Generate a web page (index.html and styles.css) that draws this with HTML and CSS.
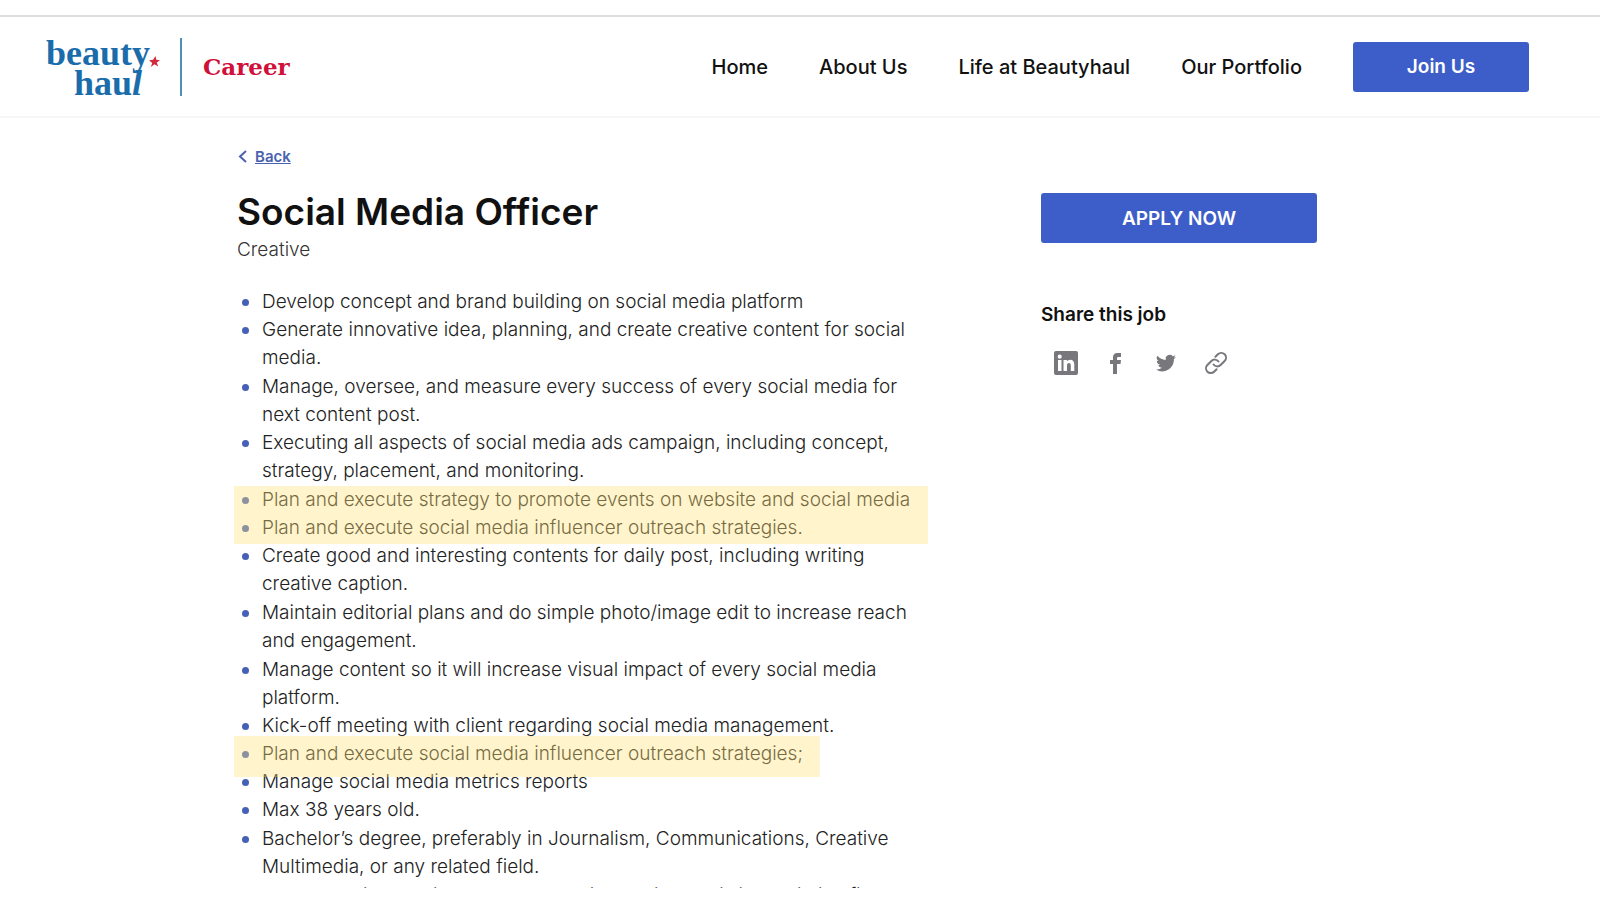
FILE: index.html
```html
<!DOCTYPE html>
<html lang="en">
<head>
  <meta charset="UTF-8">
  <title>Social Media Officer - Beautyhaul Career</title>
  <link rel="stylesheet" href="styles.css">
</head>
<body>

<div class="page">
  <header class="header">
    <a class="brand" href="#">
      <span class="logo">
        <span class="logo-top">beauty</span>
        <span class="logo-bottom">hau<i>l</i></span>
        <svg class="logo-star" viewBox="0 0 24 24" aria-hidden="true"><path d="M14 0l2 8 8 1-7 5 3 9-8-5-8 6 3-9-7-6 9-1z"/></svg>
      </span>
      <span class="brand-career">Career</span>
    </a>
    <nav class="nav">
      <a href="#">Home</a>
      <a href="#">About Us</a>
      <a href="#">Life at Beautyhaul</a>
      <a href="#">Our Portfolio</a>
      <button class="btn btn-join" type="button">Join Us</button>
    </nav>
  </header>

  <main class="content">
    <a class="back" href="#">
      <svg viewBox="0 0 10 14" aria-hidden="true"><path d="M9 2L3 7.500l6 5.500"/></svg>
      <span>Back</span>
    </a>

    <div class="columns">
      <section class="job">
        <h1>Social Media Officer</h1>
        <p class="category">Creative</p>
        <ul class="tasks">
          <li>Develop concept and brand building on social media platform</li>
          <li class="spaced">Generate innovative idea, planning, and create creative content for social media.</li>
          <li>Manage, oversee, and measure every success of every social media for next content post.</li>
          <li class="spaced">Executing all aspects of social media ads campaign, including concept, strategy, placement, and monitoring.</li>
          <li class="marked marked-double">Plan and execute strategy to promote events on website and social media</li>
          <li>Plan and execute social media influencer outreach strategies.</li>
          <li class="spaced">Create good and interesting contents for daily post, including writing creative caption.</li>
          <li class="spaced">Maintain editorial plans and do simple photo/image edit to increase reach and engagement.</li>
          <li>Manage content so it will increase visual impact of every social media platform.</li>
          <li>Kick-off meeting with client regarding social media management.</li>
          <li class="marked marked-single">Plan and execute social media influencer outreach strategies;</li>
          <li>Manage social media metrics reports</li>
          <li class="spaced">Max 38 years old.</li>
          <li class="spaced">Bachelor’s degree, preferably in Journalism, Communications, Creative Multimedia, or any related field.</li>
          <li>Have experience min. 2 years as Social Media Specialist or similar field</li>
        </ul>
      </section>

      <aside class="sidebar">
        <button class="btn btn-apply" type="button">APPLY NOW</button>
        <h2>Share this job</h2>
        <div class="share">
          <a href="#" aria-label="LinkedIn">
            <svg viewBox="0 0 24 24"><path fill-rule="evenodd" d="M2 0h20a2 2 0 0 1 2 2v20a2 2 0 0 1-2 2H2a2 2 0 0 1-2-2V2a2 2 0 0 1 2-2zM4 9v11h3.500V9zM5.700 3.600a2 2 0 1 0 0 4.100 2 2 0 0 0 0-4.100zM9.500 9v11H13v-5.500c0-1.700.7-2.600 2-2.600s1.800.9 1.800 2.600V20h3.500v-6.300c0-3.300-1.500-5-4.100-5-1.500 0-2.600.7-3.200 1.800V9z"/></svg>
          </a>
          <a href="#" aria-label="Facebook">
            <svg viewBox="0 0 24 24"><path d="M9 23V13H6V9h3V6.500C9 3.500 10.500 2 13.200 2H17v4h-2.500C13.300 6 13 6.500 13 7.500V9h4l-.5 4H13v10z"/></svg>
          </a>
          <a href="#" aria-label="Twitter">
            <svg viewBox="0 0 24 24"><path d="M22 5.900c-.7.300-1.500.5-2.400.600.900-.500 1.500-1.300 1.800-2.300-.8.500-1.700.8-2.600 1a4.100 4.100 0 0 0-7 3.700A11.600 11.600 0 0 1 3.400 4.700a4.100 4.100 0 0 0 1.300 5.500c-.7 0-1.300-.2-1.900-.500 0 2 1.400 3.700 3.300 4.100-.6.200-1.200.2-1.900.100.500 1.600 2 2.800 3.800 2.800A8.200 8.200 0 0 1 2 18.400a11.600 11.600 0 0 0 17.900-10.300c.8-.6 1.500-1.300 2.100-2.200z"/></svg>
          </a>
          <a href="#" aria-label="Copy link">
            <svg class="stroke" viewBox="0 0 24 24"><path d="M9.500 13.500a4.700 4.700 0 0 0 7.100.5l4-4a4.700 4.700 0 0 0-6.700-6.700l-2.500 2.500M14.500 10.500a4.700 4.700 0 0 0-7.100-.5l-4 4a4.700 4.700 0 0 0 6.700 6.700l2.500-2.500"/></svg>
          </a>
        </div>
      </aside>
    </div>
  </main>
</div>

</body>
</html>
```
FILE: styles.css
```css
* {
  box-sizing: border-box;
}
body {
  margin: 0;
  background: #fff;
  color: #111;
  font-family: "Inter", sans-serif;
}
a {
  color: inherit;
  text-decoration: none;
}
.page {
  height: calc(100vh - 12px);
  padding-top: 15px;
  overflow: hidden;
}

/* header */
.header {
  display: flex;
  justify-content: space-between;
  align-items: center;
  height: 103px;
  padding: 0 71px 0 46px;
  border-top: 2px solid #dcdfdd;
  border-bottom: 2px solid #f6f6f6;
}
.brand {
  display: flex;
  align-items: center;
}
.logo {
  position: relative;
  width: 136px;
  height: 58px;
  border-right: 2px solid #4f90b8;
  color: #1b6cab;
  font-family: "Liberation Serif", serif;
  font-size: 36px;
  font-weight: bold;
  line-height: 30px;
}
.logo-top,
.logo-bottom {
  display: block;
}
.logo-bottom {
  padding-left: 28px;
}
.logo-star {
  position: absolute;
  top: 18px;
  left: 103px;
  width: 11px;
  height: 11px;
  fill: #d22a3c;
}
.brand-career {
  margin-left: 21px;
  color: #d0103a;
  font-family: "DejaVu Serif", serif;
  font-size: 23px;
  font-weight: bold;
}
.nav {
  display: flex;
  align-items: center;
  gap: 51px;
  font-size: 20px;
  font-weight: 500;
}
.btn {
  height: 50px;
  border: 0;
  border-radius: 3px;
  background: #3d5dc9;
  color: #fff;
  font-family: inherit;
  font-size: 19px;
  font-weight: 600;
  cursor: pointer;
}
.btn-join {
  width: 176px;
}

/* job detail */
.content {
  padding: 26px 283px 0 237px;
}
.back {
  display: inline-flex;
  align-items: center;
  gap: 8px;
  height: 24px;
  color: #4a62b0;
  font-size: 15px;
  font-weight: 600;
}
.back span {
  text-decoration: underline;
}
.back svg {
  width: 10px;
  height: 14px;
  fill: none;
  stroke: #4a62b0;
  stroke-width: 2;
}
.columns {
  display: flex;
  justify-content: space-between;
  margin-top: 20px;
}
.job {
  flex: 0 1 675px;
}
h1 {
  margin: 0;
  font-size: 37px;
  font-weight: 600;
  line-height: 48px;
}
.category {
  margin: 0 0 24px;
  color: #333;
  font-size: 19px;
  font-weight: 300;
  line-height: 28px;
}
.tasks {
  margin: 0;
  padding: 0;
  color: #222;
  font-size: 19px;
  font-weight: 300;
  line-height: 28px;
  list-style: none;
}
.tasks li {
  position: relative;
  padding-left: 25px;
}
.tasks .spaced {
  margin-bottom: 1px;
}
.tasks li::before {
  content: "";
  position: absolute;
  top: 11px;
  left: 5px;
  width: 7px;
  height: 7px;
  border-radius: 50%;
  background: #4560b5;
}

/* highlighter strokes over the text */
.marked::after {
  content: "";
  position: absolute;
  z-index: 1;
  left: -3px;
  background: rgba(255, 226, 120, 0.38);
}
.marked-double::after {
  top: 0;
  width: 694px;
  height: 58px;
}
.marked-single::after {
  top: -4px;
  width: 586px;
  height: 41px;
}

/* sidebar */
.sidebar {
  width: 276px;
  padding-top: 5px;
}
.btn-apply {
  width: 100%;
}
h2 {
  margin: 60px 0 24px;
  font-size: 19px;
  font-weight: 600;
  line-height: 24px;
}
.share {
  display: flex;
  gap: 26px;
  padding-left: 13px;
}
.share svg {
  display: block;
  width: 24px;
  height: 24px;
  fill: #77777c;
}
.share .stroke {
  fill: none;
  stroke: #77777c;
  stroke-width: 2;
  stroke-linecap: round;
}
```
